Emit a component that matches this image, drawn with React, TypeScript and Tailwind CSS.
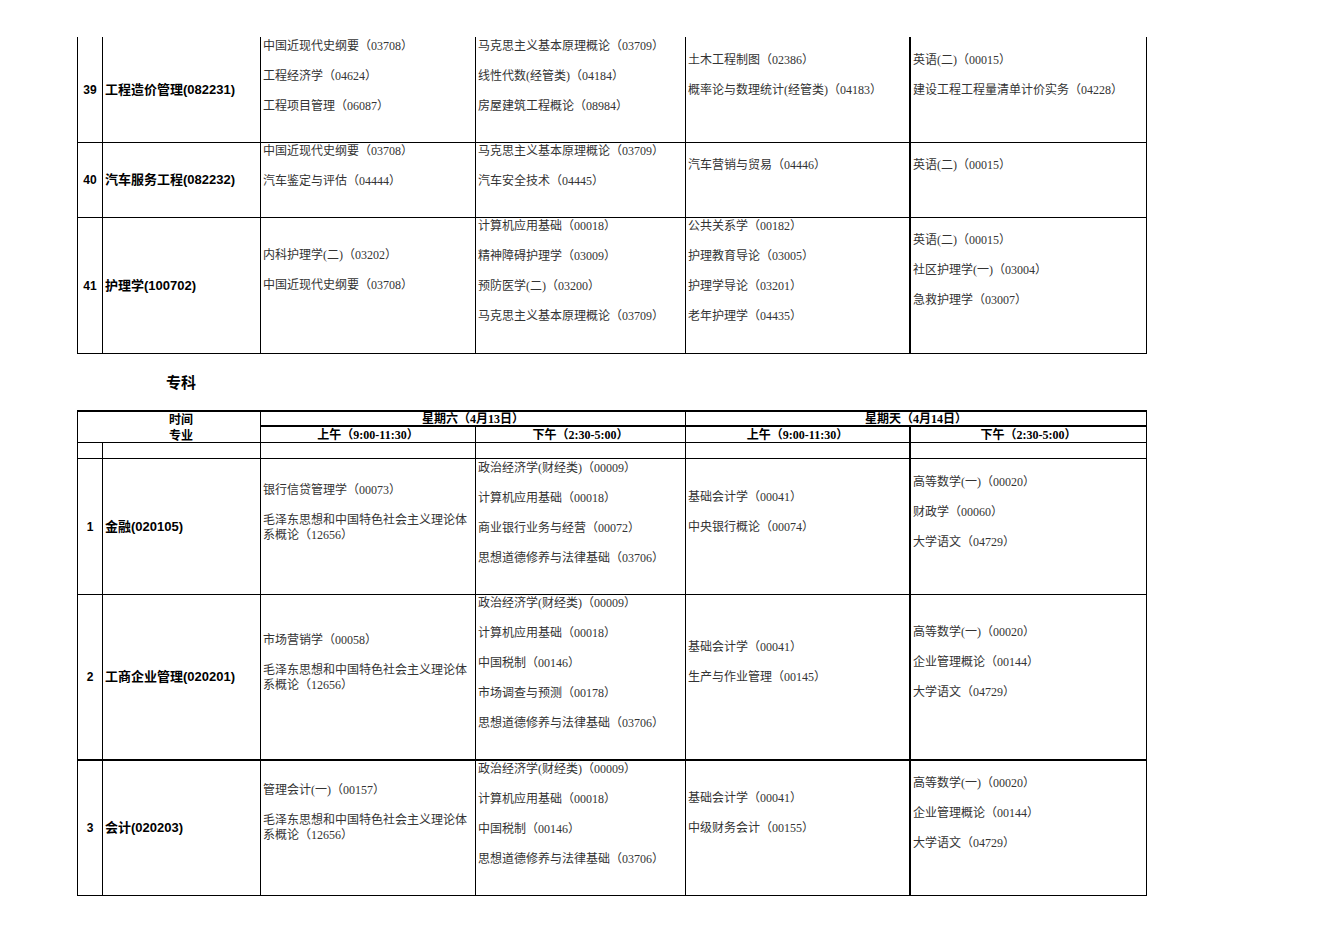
import React from "react";

type CellData = { pt: number; items: string[] };
type RowData = { n: string; name: string; h: number; thickBottom?: boolean; cells: CellData[] };

const dataFont = { fontFamily: '"Liberation Serif", "Noto Sans CJK SC", serif' };
const nameFont = { fontFamily: '"Liberation Sans", "Noto Sans CJK SC", sans-serif' };

const topRows: RowData[] = [
  {
    n: "39",
    name: "工程造价管理(082231)",
    h: 106,
    cells: [
      { pt: 2, items: ["中国近现代史纲要（03708）", "工程经济学（04624）", "工程项目管理（06087）"] },
      { pt: 2, items: ["马克思主义基本原理概论（03709）", "线性代数(经管类)（04184）", "房屋建筑工程概论（08984）"] },
      { pt: 16, items: ["土木工程制图（02386）", "概率论与数理统计(经管类)（04183）"] },
      { pt: 16, items: ["英语(二)（00015）", "建设工程工程量清单计价实务（04228）"] },
    ],
  },
  {
    n: "40",
    name: "汽车服务工程(082232)",
    h: 75,
    cells: [
      { pt: 1, items: ["中国近现代史纲要（03708）", "汽车鉴定与评估（04444）"] },
      { pt: 1, items: ["马克思主义基本原理概论（03709）", "汽车安全技术（04445）"] },
      { pt: 15, items: ["汽车营销与贸易（04446）"] },
      { pt: 15, items: ["英语(二)（00015）"] },
    ],
  },
  {
    n: "41",
    name: "护理学(100702)",
    h: 136,
    cells: [
      { pt: 30, items: ["内科护理学(二)（03202）", "中国近现代史纲要（03708）"] },
      { pt: 1, items: ["计算机应用基础（00018）", "精神障碍护理学（03009）", "预防医学(二)（03200）", "马克思主义基本原理概论（03709）"] },
      { pt: 1, items: ["公共关系学（00182）", "护理教育导论（03005）", "护理学导论（03201）", "老年护理学（04435）"] },
      { pt: 15, items: ["英语(二)（00015）", "社区护理学(一)（03004）", "急救护理学（03007）"] },
    ],
  },
];

const MAO = "毛泽东思想和中国特色社会主义理论体\n系概论（12656）";

const bottomRows: RowData[] = [
  {
    n: "1",
    name: "金融(020105)",
    h: 136,
    cells: [
      { pt: 24, items: ["银行信贷管理学（00073）", MAO] },
      { pt: 2, items: ["政治经济学(财经类)（00009）", "计算机应用基础（00018）", "商业银行业务与经营（00072）", "思想道德修养与法律基础（03706）"] },
      { pt: 31, items: ["基础会计学（00041）", "中央银行概论（00074）"] },
      { pt: 16, items: ["高等数学(一)（00020）", "财政学（00060）", "大学语文（04729）"] },
    ],
  },
  {
    n: "2",
    name: "工商企业管理(020201)",
    h: 166,
    thickBottom: true,
    cells: [
      { pt: 38, items: ["市场营销学（00058）", MAO] },
      { pt: 1, items: ["政治经济学(财经类)（00009）", "计算机应用基础（00018）", "中国税制（00146）", "市场调查与预测（00178）", "思想道德修养与法律基础（03706）"] },
      { pt: 45, items: ["基础会计学（00041）", "生产与作业管理（00145）"] },
      { pt: 30, items: ["高等数学(一)（00020）", "企业管理概论（00144）", "大学语文（04729）"] },
    ],
  },
  {
    n: "3",
    name: "会计(020203)",
    h: 135,
    cells: [
      { pt: 22, items: ["管理会计(一)（00157）", MAO] },
      { pt: 1, items: ["政治经济学(财经类)（00009）", "计算机应用基础（00018）", "中国税制（00146）", "思想道德修养与法律基础（03706）"] },
      { pt: 30, items: ["基础会计学（00041）", "中级财务会计（00155）"] },
      { pt: 15, items: ["高等数学(一)（00020）", "企业管理概论（00144）", "大学语文（04729）"] },
    ],
  },
];

function Items({ cell }: { cell: CellData }) {
  return (
    <div className="flex flex-col gap-[15px] pl-[2px] text-[12px] leading-[15px] text-[#333]" style={{ ...dataFont, paddingTop: cell.pt }}>
      {cell.items.map((t, i) => (
        <div key={i} className="whitespace-pre">
          {t}
        </div>
      ))}
    </div>
  );
}

function Row({ row }: { row: RowData }) {
  const bb = row.thickBottom ? "border-b-2" : "border-b";
  return (
    <>
      <div className={`${bb} border-r border-black flex items-center justify-center text-[12px] font-bold text-black`} style={{ ...nameFont, height: row.h }}>
        {row.n}
      </div>
      <div className={`${bb} border-r border-black flex items-center pl-[2px] text-[13px] font-bold text-black`} style={nameFont}>
        {row.name}
      </div>
      <div className={`${bb} border-r border-black`}>
        <Items cell={row.cells[0]} />
      </div>
      <div className={`${bb} border-r border-black`}>
        <Items cell={row.cells[1]} />
      </div>
      <div className={`${bb} border-r-2 border-black`}>
        <Items cell={row.cells[2]} />
      </div>
      <div className={`${bb} border-r border-black`}>
        <Items cell={row.cells[3]} />
      </div>
    </>
  );
}

const headFont = { fontFamily: '"Liberation Serif", "Noto Sans CJK SC", serif' };

export default function App() {
  return (
    <div className="w-[1324px] h-[936px] bg-white overflow-hidden">
      <div className="pt-[37px] pl-[77px]">
        <div className="grid w-[1070px] grid-cols-[25px_158px_215px_210px_225px_236px] border-l border-black">
          {topRows.map((r) => (
            <Row key={r.n} row={r} />
          ))}
        </div>
      </div>

      <div className="h-[56px] flex items-center pl-[166px] pt-[2px] text-[15px] font-bold text-black" style={nameFont}>
        专科
      </div>

      <div className="pl-[77px]">
        <div className="grid w-[1070px] grid-cols-[25px_158px_215px_210px_225px_236px] grid-rows-[15px_16px_16px] border-l border-t-2 border-black">
          <div className="col-span-2 row-span-2 border-r border-b border-black flex flex-col items-center pl-[24px] text-[12px] font-bold leading-[16px] text-black" style={headFont}>
            <div>时间</div>
            <div>专业</div>
          </div>
          <div className="col-span-2 border-r border-b-2 border-black flex items-center justify-center pt-[1px] text-[12px] font-bold leading-[14px] text-black" style={headFont}>
            星期六（4月13日）
          </div>
          <div className="col-span-2 border-r border-b-2 border-black flex items-center justify-center pt-[1px] text-[12px] font-bold leading-[14px] text-black" style={headFont}>
            星期天（4月14日）
          </div>
          <div className="border-r border-b border-black flex items-center justify-center text-[12px] font-bold leading-[14px] text-black" style={headFont}>
            上午（9:00-11:30）
          </div>
          <div className="border-r border-b border-black flex items-center justify-center text-[12px] font-bold leading-[14px] text-black" style={headFont}>
            下午（2:30-5:00）
          </div>
          <div className="border-r-2 border-b border-black flex items-center justify-center text-[12px] font-bold leading-[14px] text-black" style={headFont}>
            上午（9:00-11:30）
          </div>
          <div className="border-r border-b border-black flex items-center justify-center text-[12px] font-bold leading-[14px] text-black" style={headFont}>
            下午（2:30-5:00）
          </div>

          <div className="border-r border-b border-black" />
          <div className="border-r border-b border-black" />
          <div className="border-r border-b border-black" />
          <div className="border-r border-b border-black" />
          <div className="border-r-2 border-b border-black" />
          <div className="border-r border-b border-black" />

          {bottomRows.map((r) => (
            <Row key={r.n} row={r} />
          ))}
        </div>
      </div>
    </div>
  );
}
